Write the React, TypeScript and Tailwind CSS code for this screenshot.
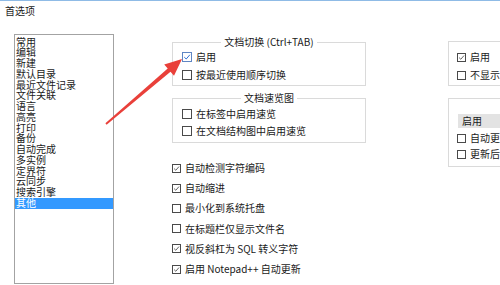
import React from "react";

type BoxKind = "blue" | "grey" | "plain";

function CheckBox({ checked, kind, size }: { checked: boolean; kind: BoxKind; size: "lg" | "sm" }) {
  const sizeCls = size === "lg" ? "w-[10px] h-[10px]" : "w-[9px] h-[9px]";
  const borderCls = kind === "blue" ? "border-[#5f86c4]" : "border-[#4a4a4a]";
  const stroke = kind === "blue" ? "#2a6ad2" : "#4a4a4a";
  return (
    <span className={`inline-flex shrink-0 items-center justify-center border bg-white ${sizeCls} ${borderCls}`}>
      {checked && (
        <svg viewBox="0 0 10 10" className="w-full h-full">
          <path d="M1.6 5.2 L4 7.5 L8.6 2.2" fill="none" stroke={stroke} strokeWidth="1.2" />
        </svg>
      )}
    </span>
  );
}

function Row({
  label,
  checked = false,
  kind = "plain",
  size = "lg",
  rowCls,
}: {
  label: React.ReactNode;
  checked?: boolean;
  kind?: BoxKind;
  size?: "lg" | "sm";
  rowCls: string;
}) {
  return (
    <div className={`flex items-center whitespace-nowrap ${rowCls}`}>
      <CheckBox checked={checked} kind={kind} size={size} />
      <span className="ml-[4px] text-[10px] leading-[12px]">{label}</span>
    </div>
  );
}

const listItems = [
  "常用",
  "编辑",
  "新建",
  "默认目录",
  "最近文件记录",
  "文件关联",
  "语言",
  "高亮",
  "打印",
  "备份",
  "自动完成",
  "多实例",
  "定界符",
  "云同步",
  "搜索引擎",
  "其他",
];

function GroupTitle({ text }: { text: string }) {
  return (
    <span className="absolute left-0 right-0 -top-[8px] flex justify-center">
      <span className="bg-white px-[3px] text-[10px] leading-[14px] whitespace-nowrap">{text}</span>
    </span>
  );
}

export default function App() {
  return (
    <div className="relative w-[500px] h-[285px] overflow-hidden bg-white border-t border-[#8fbbe6] font-['Noto_Sans_CJK_SC',sans-serif] text-[#1a1a1a]">
      <div className="h-[19px] pl-[5px] pt-[3px] text-[10px] leading-[13px]">首选项</div>
      <div className="flex items-start h-[265px]">
        <div className="ml-[2px] w-px self-stretch bg-[#dedede]" />
        {/* list box */}
        <div className="ml-[12px] mt-[14px] w-[100px] h-[250px] shrink-0 border border-[#a3a3a3] pt-[1.5px]">
          {listItems.map((it) => (
            <div
              key={it}
              className={
                it === "其他"
                  ? "h-[10.75px] leading-[10.75px] text-[10px] pl-[1px] bg-[#3399ff] text-white whitespace-nowrap"
                  : "h-[10.75px] leading-[10.75px] text-[10px] pl-[1px] whitespace-nowrap"
              }
            >
              {it}
            </div>
          ))}
        </div>

        {/* middle column */}
        <div className="ml-[58px] mt-[22px] w-[194px] shrink-0 flex flex-col">
          <div className="relative h-[44px] border border-[#dadada] pt-[5px] pl-[9px]">
            <GroupTitle text="文档切换 (Ctrl+TAB)" />
            <Row rowCls="h-[18px]" label="启用" checked kind="blue" />
            <Row rowCls="h-[18px]" label="按最近使用顺序切换" />
          </div>
          <div className="relative mt-[12px] h-[45px] border border-[#dadada] pt-[6px] pl-[9px]">
            <GroupTitle text="文档速览图" />
            <Row rowCls="h-[17.5px]" label="在标签中启用速览" />
            <Row rowCls="h-[17.5px]" label="在文档结构图中启用速览" />
          </div>
          <div className="mt-[15px] flex flex-col">
            <Row rowCls="h-[20.2px]" size="sm" kind="grey" checked label="自动检测字符编码" />
            <Row rowCls="h-[20.2px]" size="sm" kind="grey" checked label="自动缩进" />
            <Row rowCls="h-[20.2px]" size="sm" kind="grey" label="最小化到系统托盘" />
            <Row rowCls="h-[20.2px]" size="sm" kind="grey" label="在标题栏仅显示文件名" />
            <Row rowCls="h-[20.2px]" size="sm" kind="grey" checked label="视反斜杠为 SQL 转义字符" />
            <Row rowCls="h-[20.2px]" size="sm" kind="grey" checked label="启用 Notepad++ 自动更新" />
          </div>
        </div>

        {/* right column */}
        <div className="ml-[82px] mt-[21px] w-[120px] shrink-0 flex flex-col">
          <div className="h-[45px] border border-[#dadada] pt-[6px] pl-[8px]">
            <Row rowCls="h-[18px]" size="sm" kind="grey" checked label="启用" />
            <Row rowCls="h-[18px]" size="sm" kind="grey" label="不显示下划线" />
          </div>
          <div className="mt-[12px] h-[69px] border border-[#dadada] pt-[15px] pl-[8px]">
            <div className="ml-[1px] h-[14px] bg-[#e3e3e3] pl-[4px] text-[10px] leading-[14px]">启用</div>
            <div className="mt-[2px]">
              <Row rowCls="h-[16px]" size="sm" kind="grey" label="自动更新文件" />
              <Row rowCls="h-[16px]" size="sm" kind="grey" label="更新后滚动到最后一行" />
            </div>
          </div>
        </div>
      </div>

      {/* annotation arrow */}
      <svg className="absolute left-0 top-0 pointer-events-none" width="500" height="285" viewBox="0 0 500 285">
        <polygon
          points="182,58 174,74.8 170.5,70.7 106.6,123.7 105.4,122.3 167.7,67.4 164.2,63.4"
          fill="#e9403a"
        />
      </svg>
    </div>
  );
}
